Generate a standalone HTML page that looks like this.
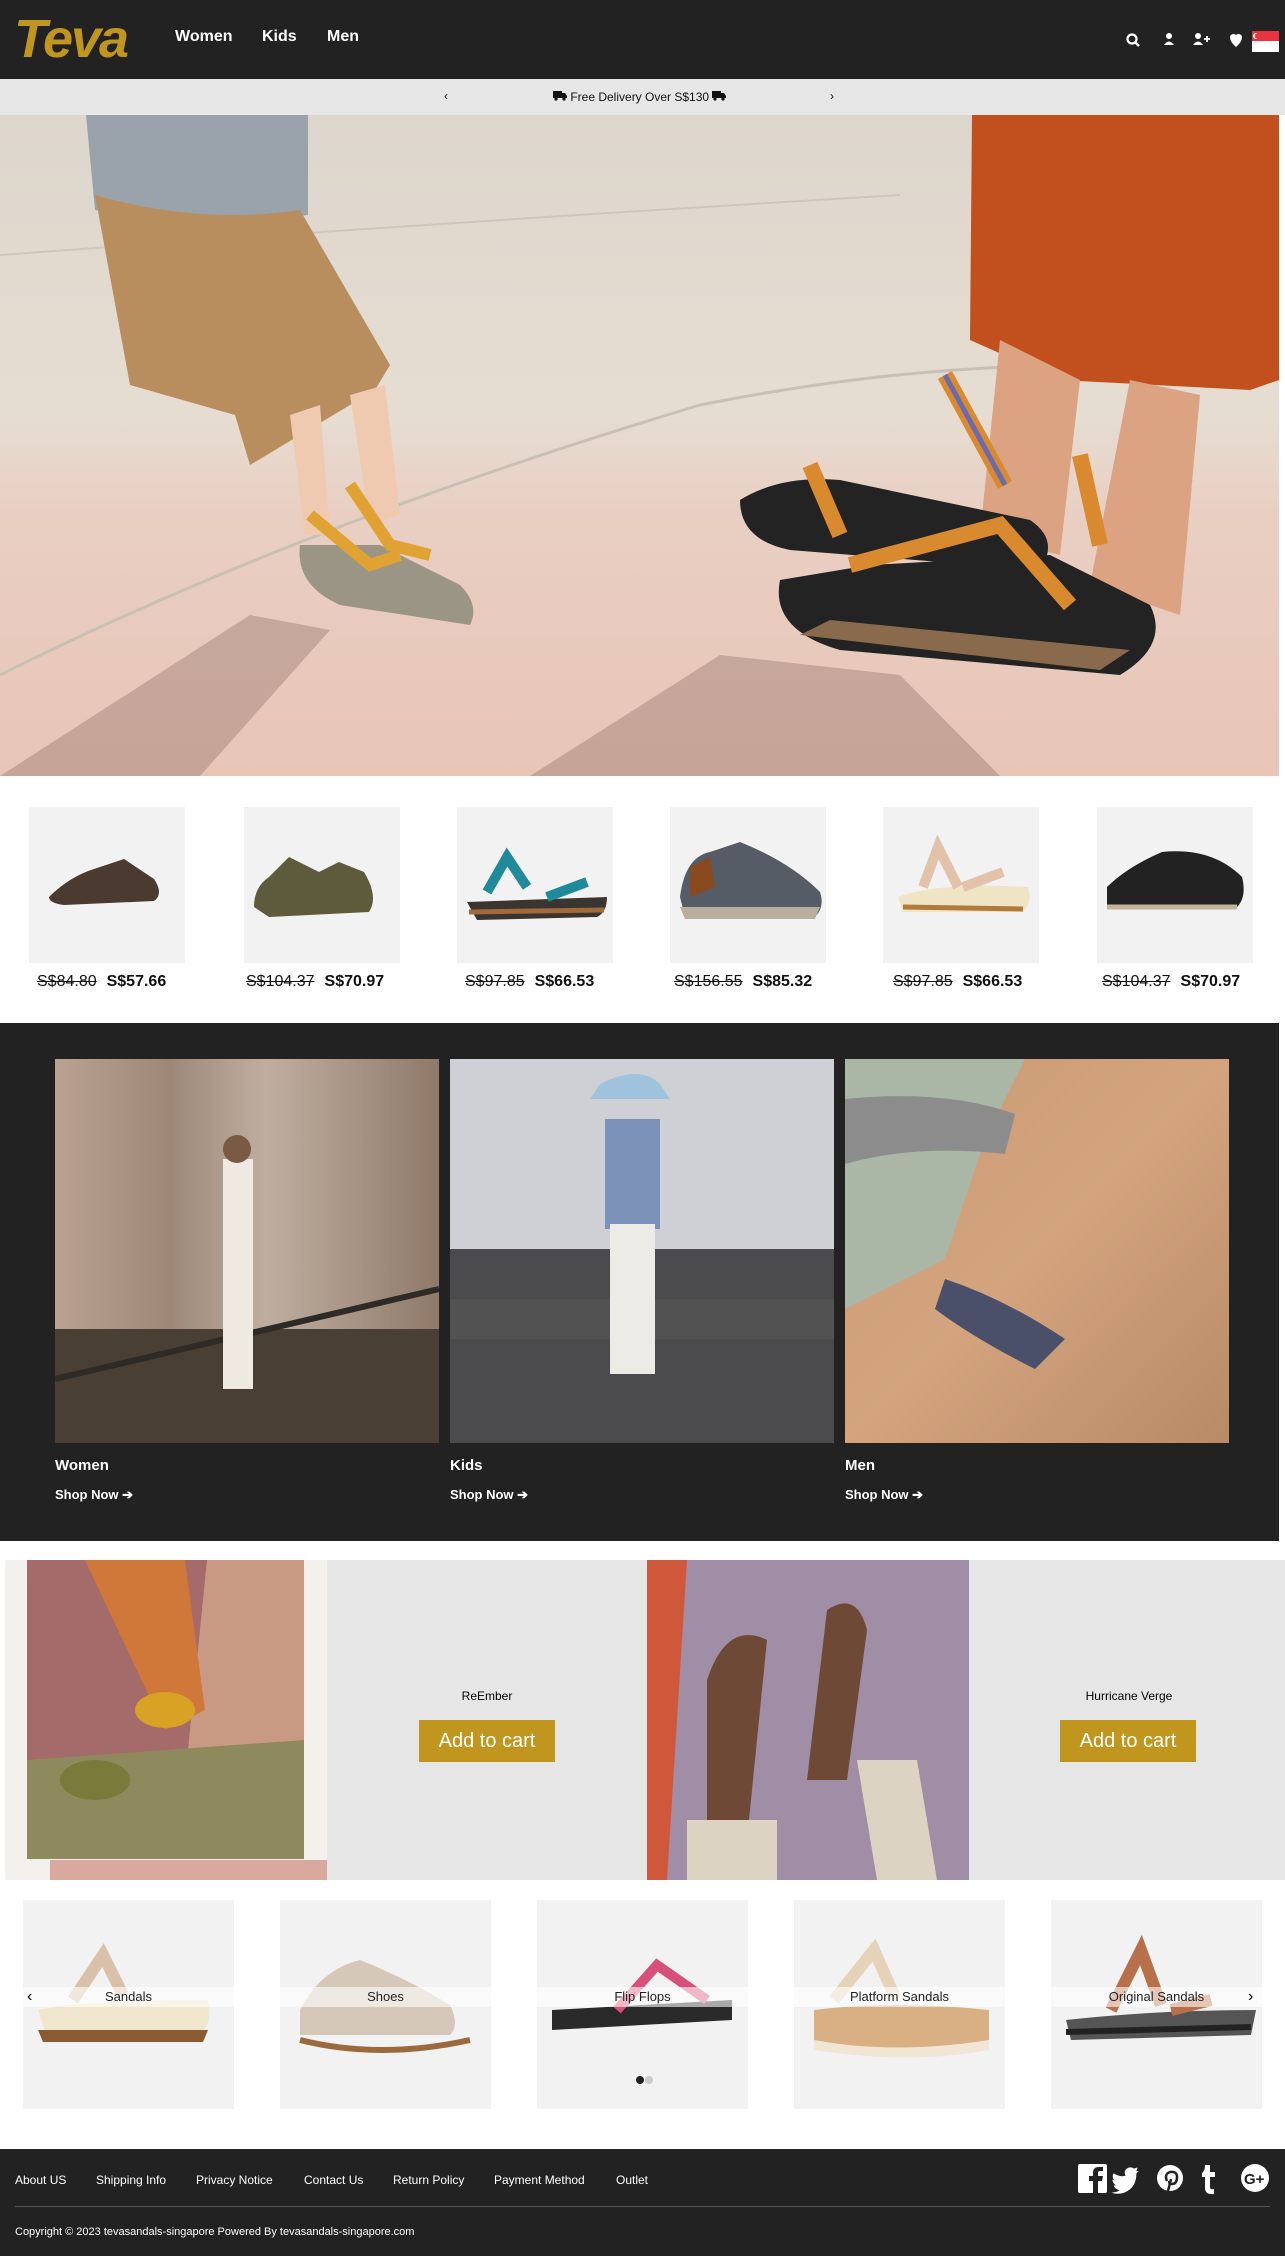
<!DOCTYPE html>
<html><head><meta charset="utf-8">
<style>
*{margin:0;padding:0;box-sizing:border-box}
body{width:1285px;height:2256px;background:#fff;font-family:"Liberation Sans",Arial,sans-serif;position:relative;overflow:hidden}
.abs{position:absolute}
header{position:absolute;left:0;top:0;width:1285px;height:79px;background:#222}
.nav a{position:absolute;top:28px;color:#fff;font-weight:bold;font-size:16px;text-decoration:none}
.bar{position:absolute;left:0;top:79px;width:1285px;height:36px;background:#e6e6e6;font-size:12px;color:#111}
.prod{position:absolute;top:807px;width:156px;height:156px;background:#f2f2f2}
.price{position:absolute;top:973px;font-size:16px;white-space:nowrap;color:#111}
.price s{font-weight:normal;margin-right:10px}
.price b{font-weight:bold}
.dark{position:absolute;left:0;top:1023px;width:1279px;height:518px;background:#222}
.cat{position:absolute;top:1059px;width:384px;height:384px;overflow:hidden}
.cl{position:absolute;top:1457px;color:#fff;font-weight:bold;font-size:15px}
.sn{position:absolute;top:1487px;color:#fff;font-weight:bold;font-size:13px}
.gp{position:absolute;top:1560px;height:320px;background:#e6e6e6}
.btn{position:absolute;top:1720px;width:136px;height:42px;background:#c0961f;color:#fff;font-size:20px;text-align:center;line-height:42px}
.cc{position:absolute;top:1900px;width:211px;height:209px;background:#f2f2f2;overflow:hidden}
.band{position:absolute;left:0;top:87px;width:211px;height:20px;background:rgba(255,255,255,.6);text-align:center;font-size:13px;line-height:20px;color:#222}
footer{position:absolute;left:0;top:2149px;width:1285px;height:107px;background:#222;color:#fff}
footer a{position:absolute;top:24px;color:#fff;font-size:12px;text-decoration:none}
</style></head><body>

<header>
<div class="abs" style="left:14px;top:12px;color:#c0961f;font-size:54px;font-weight:bold;font-style:italic;letter-spacing:-2px;line-height:54px;font-family:'Liberation Sans',sans-serif">Teva</div>
<div class="nav"><a style="left:175px">Women</a><a style="left:262px">Kids</a><a style="left:327px">Men</a></div>
<svg class="abs" style="left:1124px;top:31px" width="160" height="22" viewBox="0 0 160 22">
<circle cx="8" cy="8" r="4.5" fill="none" stroke="#fff" stroke-width="2.2"/><line x1="11" y1="11" x2="15" y2="15" stroke="#fff" stroke-width="2.5"/>
<circle cx="45" cy="5" r="3" fill="#fff"/><path d="M40 14 q5-7 10 0z" fill="#fff"/>
<circle cx="74" cy="5" r="3" fill="#fff"/><path d="M69 14 q5-7 10 0z" fill="#fff"/><path d="M80 8h6M83 5v6" stroke="#fff" stroke-width="1.8"/>
<path d="M106 6 a3.5 3.5 0 0 1 6-2 a3.5 3.5 0 0 1 6 2 q0 5-6 10 q-6-5-6-10z" fill="#fff"/>
<rect x="128" y="0" width="27" height="10" fill="#e8343c"/><rect x="128" y="10" width="27" height="11" fill="#fff"/><circle cx="132" cy="5" r="3" fill="#fff"/><circle cx="133.5" cy="5" r="2.7" fill="#e8343c"/>
</svg>
</header>

<div class="bar">
<span class="abs" style="left:444px;top:10px">‹</span>
<span class="abs" style="left:553px;top:11px"><svg width="14" height="11" viewBox="0 0 14 11"><rect x="0" y="1" width="9" height="7" fill="#111"/><path d="M9 3h3l2 3v2h-5z" fill="#111"/><circle cx="3" cy="9" r="1.6" fill="#111"/><circle cx="11" cy="9" r="1.6" fill="#111"/></svg> Free Delivery Over S$130 <svg width="14" height="11" viewBox="0 0 14 11"><rect x="0" y="1" width="9" height="7" fill="#111"/><path d="M9 3h3l2 3v2h-5z" fill="#111"/><circle cx="3" cy="9" r="1.6" fill="#111"/><circle cx="11" cy="9" r="1.6" fill="#111"/></svg></span>
<span class="abs" style="left:830px;top:10px">›</span>
</div>

<svg class="abs" style="left:0;top:115px" width="1279" height="661" viewBox="0 0 1279 661">
<defs><linearGradient id="gr" x1="0" y1="0" x2="0" y2="1"><stop offset="0" stop-color="#ddd6cc"/><stop offset=".45" stop-color="#e6ddd2"/><stop offset=".6" stop-color="#e9cfc3"/><stop offset="1" stop-color="#e8c5b7"/></linearGradient></defs>
<rect width="1279" height="661" fill="url(#gr)"/>
<path d="M0 560 q300-150 700-270 q300-60 579-30" fill="none" stroke="#c9bfb3" stroke-width="3"/>
<path d="M0 140 q400-30 900-60" fill="none" stroke="#cfc6ba" stroke-width="2"/>
<path d="M0 661 L250 500 L330 515 L200 661z M530 661 L720 540 L900 560 L1000 661z" fill="#a98a80" opacity=".55"/>
<path d="M86 0 H308 V100 Q200 115 95 95z" fill="#9aa3ab"/>
<path d="M95 80 Q200 110 300 95 L390 250 L375 275 L250 350 L235 300 L130 270z" fill="#b88e5e"/>
<path d="M290 300 L305 420 L330 420 L320 290z M350 280 L370 410 L400 400 L385 270z" fill="#efc9b0"/>
<path d="M300 430 q-5 40 40 60 l130 20 q10-20-10-40 l-80-40z" fill="#9b9585"/>
<path d="M310 400 l60 50 l30-10 M350 370 l40 60 l40 10" stroke="#e0a232" stroke-width="12" fill="none"/>
<path d="M972 0 H1279 V265 L1250 275 L1060 265 L970 225z" fill="#c2501e"/>
<path d="M1000 225 L980 420 L1060 440 L1080 265z M1130 265 L1090 470 L1180 500 L1200 280z" fill="#dca383"/>
<path d="M740 385 q0 40 50 50 l250 20 q20-30-10-50 l-190-40 q-60-5-100 20z" fill="#232323"/>
<path d="M780 465 q-10 50 60 70 l280 25 q50-30 30-70 l-100-50 l-180 10z" fill="#232323"/>
<path d="M800 520 l300 35 l30-20 l-300-30z" fill="#8a6a4c"/>
<path d="M810 350 l30 70 M945 260 l60 110 M850 450 l150-40 l70 80 M1080 340 l20 90" stroke="#d98a2e" stroke-width="16" fill="none"/>
<path d="M945 260 l60 110" stroke="#6a6ab0" stroke-width="5" fill="none"/>
</svg>

<div class="prod" style="left:29px"><svg width="156" height="156"><path d="M20 90 q20-20 45-28 l30-10 l30 20 q10 15 0 22 l-90 4 q-15-2-15-8z" fill="#4a3a30"/></svg></div>
<div class="prod" style="left:244px"><svg width="156" height="156"><path d="M10 100 q0-20 15-30 l20-20 l30 15 l20-10 l25 10 q15 25 5 40 l-100 5z" fill="#5e5a3c"/></svg></div>
<div class="prod" style="left:457px"><svg width="156" height="156"><path d="M10 95 l140-5 q0 15-10 20 l-120 3z" fill="#3a3530"/><path d="M30 85 l20-35 l20 30 M90 90 l40-15" stroke="#1e8a9a" stroke-width="10" fill="none"/><path d="M12 105 l135-2" stroke="#a06a3c" stroke-width="5"/></svg></div>
<div class="prod" style="left:670px"><svg width="156" height="156"><path d="M10 90 q5-40 30-45 l30-10 q50 20 80 50 q5 15-5 25 l-130 0z" fill="#555c66"/><path d="M10 100 l140 0 l-5 12 l-130 0z" fill="#b9ad9b"/><path d="M20 60 l20-10 l5 30 l-25 10z" fill="#8a4a20"/></svg></div>
<div class="prod" style="left:883px"><svg width="156" height="156"><path d="M15 90 q40-15 130-10 q5 15-5 25 l-120 0z" fill="#efe4c4"/><path d="M20 100 l120 2" stroke="#b07a3c" stroke-width="5"/><path d="M40 80 l15-40 l20 40 M80 80 l40-15" stroke="#e2c3a9" stroke-width="10" fill="none"/></svg></div>
<div class="prod" style="left:1097px"><svg width="156" height="156"><path d="M10 80 q20-20 55-35 q50-5 80 25 q5 20-5 30 l-130 0z" fill="#222"/><path d="M10 100 l130 0" stroke="#c2b49c" stroke-width="5"/></svg></div>

<div class="price" style="left:37px"><s>S$84.80</s><b>S$57.66</b></div>
<div class="price" style="left:246px"><s>S$104.37</s><b>S$70.97</b></div>
<div class="price" style="left:465px"><s>S$97.85</s><b>S$66.53</b></div>
<div class="price" style="left:674px"><s>S$156.55</s><b>S$85.32</b></div>
<div class="price" style="left:893px"><s>S$97.85</s><b>S$66.53</b></div>
<div class="price" style="left:1102px"><s>S$104.37</s><b>S$70.97</b></div>

<div class="dark"></div>
<div class="cat" style="left:55px;background:linear-gradient(90deg,#b8a393 0,#9d8878 30%,#bfae9f 55%,#8f7a6a 100%)">
<svg width="384" height="384"><rect x="0" y="270" width="384" height="114" fill="#4a3f34"/><path d="M0 320 L384 230" stroke="#2e2a26" stroke-width="6"/><rect x="168" y="100" width="30" height="230" fill="#eee9e1"/><circle cx="182" cy="90" r="14" fill="#7a5a44"/></svg></div>
<div class="cat" style="left:450px;background:#cfd0d6">
<svg width="384" height="384"><rect x="0" y="190" width="384" height="194" fill="#4b4b4d"/><path d="M0 260 h384" stroke="#5a5a5a" stroke-width="40" opacity=".5"/><path d="M150 25 q40-20 60 0 l10 15 h-80z" fill="#9fc3dc"/><rect x="155" y="60" width="55" height="110" fill="#7d92b8"/><rect x="160" y="165" width="45" height="150" fill="#ecebe6"/></svg></div>
<div class="cat" style="left:845px;background:linear-gradient(135deg,#c89a72,#d3a47e 50%,#b88a66)">
<svg width="384" height="384"><path d="M0 0 h180 l-40 80 l-40 120 l-100 50z" fill="#aab6a6"/><path d="M0 40 q100-10 170 15 l-10 40 q-90-10-160 10z" fill="#8c8c8c"/><path d="M100 220 q60 20 120 60 l-30 30 q-60-30-100-60z" fill="#4a506a"/></svg></div>
<div class="cl" style="left:55px">Women</div><div class="cl" style="left:450px">Kids</div><div class="cl" style="left:845px">Men</div>
<div class="sn" style="left:55px">Shop Now ➔</div><div class="sn" style="left:450px">Shop Now ➔</div><div class="sn" style="left:845px">Shop Now ➔</div>

<div class="abs" style="left:5px;top:1560px;width:322px;height:320px;background:#f3f1ec">
<svg width="322" height="320"><rect x="45" y="300" width="277" height="20" fill="#d9a9a0"/><rect x="22" y="0" width="277" height="299" fill="#c89a84"/><path d="M22 0 h180 l-30 299 h-150z" fill="#a56a6a"/><path d="M80 0 h100 l20 150 l-40 20z" fill="#d0773a"/><path d="M22 200 l277 -20 v119 h-277z" fill="#8e8a5e"/><ellipse cx="160" cy="150" rx="30" ry="18" fill="#d8a225"/><ellipse cx="90" cy="220" rx="35" ry="20" fill="#7a7a3a"/></svg></div>
<div class="gp" style="left:327px;width:320px"></div>
<div class="abs" style="left:647px;top:1560px;width:322px;height:320px;background:#a08ea6">
<svg width="322" height="320"><path d="M0 0 h40 l-20 320 h-20z" fill="#d0583a"/><path d="M60 120 q20-60 60-40 l-20 200 h-40z" fill="#6e4a36"/><path d="M180 50 q30-20 40 20 l-20 150 h-40z" fill="#6e4a36"/><path d="M40 260 h90 v60 h-90z M210 200 l60 0 l20 120 h-60z" fill="#ddd3c3"/></svg></div>
<div class="gp" style="left:969px;width:316px"></div>
<div class="abs" style="left:327px;top:1689px;width:320px;text-align:center;font-size:12px">ReEmber</div>
<div class="abs" style="left:969px;top:1689px;width:320px;text-align:center;font-size:12px">Hurricane Verge</div>
<div class="btn" style="left:419px">Add to cart</div>
<div class="btn" style="left:1060px">Add to cart</div>

<div class="cc" style="left:23px"><svg width="211" height="209"><path d="M15 110 q40-10 170 -10 q5 25-10 40 l-150 0z" fill="#efe6cc"/><path d="M15 130 l170 0 l-5 12 l-160 0z" fill="#8a5a30"/><path d="M50 100 l30-45 l20 40" stroke="#d9c0a8" stroke-width="12" fill="none"/></svg><div class="band">Sandals</div></div>
<div class="cc" style="left:280px"><svg width="211" height="209"><path d="M20 110 q20-40 60-50 q50 20 90 45 q10 20 0 30 l-150 0z" fill="#d6c8b8"/><path d="M20 140 q80 20 170 0" stroke="#9a6a3c" stroke-width="6" fill="none"/></svg><div class="band">Shoes</div></div>
<div class="cc" style="left:537px"><svg width="211" height="209"><path d="M15 110 l180-10 v20 l-180 10z" fill="#2a2a2a"/><path d="M80 110 l40-45 l50 35" stroke="#d8507a" stroke-width="10" fill="none"/><circle cx="103" cy="180" r="4" fill="#222"/><circle cx="112" cy="180" r="4" fill="#ccc"/></svg><div class="band">Flip Flops</div></div>
<div class="cc" style="left:794px"><svg width="211" height="209"><path d="M20 110 q80-10 175 0 v35 q-80 20-175 0z" fill="#d8b083"/><path d="M20 140 q80 15 175 0 v10 q-80 15-175 0z" fill="#f1e6d6"/><path d="M40 100 l40-50 l20 45" stroke="#e5d3b9" stroke-width="12" fill="none"/></svg><div class="band">Platform Sandals</div></div>
<div class="cc" style="left:1051px"><svg width="211" height="209"><path d="M15 120 q90-10 190 -10 l-5 25 l-180 5z" fill="#555"/><path d="M15 132 l185 -5" stroke="#222" stroke-width="6"/><path d="M60 110 l30-60 l20 55 M120 110 l40-10" stroke="#b8704a" stroke-width="12" fill="none"/></svg><div class="band">Original Sandals</div></div>
<div class="abs" style="left:27px;top:1988px;font-size:16px">‹</div>
<div class="abs" style="left:1248px;top:1988px;font-size:16px">›</div>

<footer>
<a style="left:15px">About US</a><a style="left:96px">Shipping Info</a><a style="left:196px">Privacy Notice</a><a style="left:304px">Contact Us</a><a style="left:393px">Return Policy</a><a style="left:494px">Payment Method</a><a style="left:616px">Outlet</a>
<svg class="abs" style="left:1078px;top:14px" width="194" height="32" viewBox="0 0 194 32">
<rect x="0" y="1" width="29" height="29" rx="2" fill="#fff"/><path d="M20 31 V18 h4 l1-5 h-5 v-3 q0-2 2-2 h3 V4 h-4 q-6 0-6 6 v3 h-4 v5 h4 v13z" fill="#222"/>
<g transform="translate(-2,2)"><path d="M40 8 q4 2 8 1 q-2-4 1-6 q3-2 6 0 l3-1 l-1 3 l2 0 l-2 2 q0 12-10 16 q-6 2-11 0 q4 0 7-2 q-4-1-5-4 h2 q-3-2-3-5 l2 1 q-3-3-1-6z" fill="#fff" transform="translate(40,0) scale(1.2) translate(-40,0)"/></g>
<circle cx="92" cy="15" r="13" fill="#fff"/><path d="M90 28 l3-12 M89 18 q-3-7 3-9 q7-1 7 5 q0 7-5 7 q-3 0-3-3" stroke="#222" stroke-width="2.5" fill="none"/>
<path d="M127 2 h5 v7 h5 v5 h-5 v10 q0 3 4 2 v5 q-9 1-9-6 v-11 h-3 v-4 q3-2 3-8z" fill="#fff"/>
<circle cx="177" cy="15" r="14" fill="#fff"/><text x="166" y="21" font-family="Liberation Sans" font-weight="bold" font-size="15" fill="#222">G+</text>
</svg>
<div class="abs" style="left:15px;top:57px;width:1255px;height:1px;background:#555"></div>
<div class="abs" style="left:15px;top:77px;font-size:11px">Copyright © 2023 tevasandals-singapore Powered By tevasandals-singapore.com</div>
</footer>
</body></html>
